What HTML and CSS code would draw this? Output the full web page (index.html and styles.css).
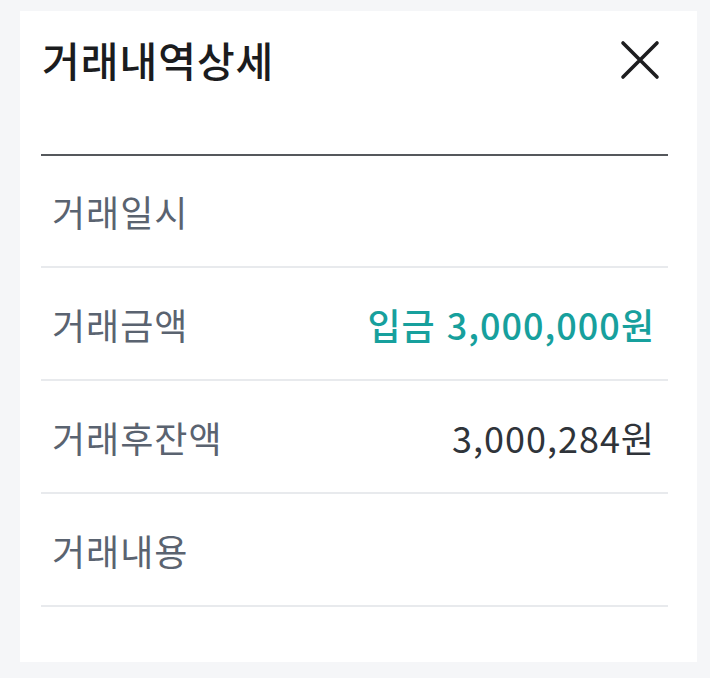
FILE: index.html
```html
<!DOCTYPE html>
<html lang="ko">
<head>
<meta charset="utf-8">
<link rel="stylesheet" href="styles.css">
</head>
<body>
<div class="card">
  <div class="header">
    <h1 class="title">거래내역상세</h1>
    <button class="close" aria-label="닫기">
      <svg width="40" height="40" viewBox="0 0 40 40"><path d="M3 3 L37 37 M37 3 L3 37" stroke="#1d1d1f" stroke-width="3.6" stroke-linecap="round" fill="none"/></svg>
    </button>
  </div>
  <div class="list">
    <div class="row"><span class="label">거래일시</span><span class="value"></span></div>
    <div class="row"><span class="label">거래금액</span><span class="value deposit">입금 3,000,000원</span></div>
    <div class="row"><span class="label">거래후잔액</span><span class="value">3,000,284원</span></div>
    <div class="row"><span class="label">거래내용</span><span class="value"></span></div>
  </div>
</div>
</body>
</html>
```

FILE: styles.css
```css
* { box-sizing: border-box; }
html, body { margin: 0; padding: 0; }
body {
  background: #f5f6f8;
  font-family: "Noto Sans CJK KR", "Noto Sans", sans-serif;
  width: 710px;
  height: 678px;
  padding: 11px 13px 0 20px;
}
.card {
  background: #ffffff;
  height: 651px;
  padding: 0 29px 0 21px;
}
.header {
  height: 145px;
  border-bottom: 2px solid #55585c;
  display: flex;
  justify-content: space-between;
  align-items: flex-start;
  padding-top: 22px;
}
.title {
  margin: 0;
  font-size: 41px;
  font-weight: 500;
  letter-spacing: 1px;
  color: #1b1c1e;
  line-height: 52px;
  padding-left: 1px;
}
.close {
  border: 0;
  background: none;
  padding: 0;
  margin: 7px 8px 0 0;
  width: 40px;
  height: 40px;
}
.close svg { display: block; }
.row {
  height: 113px;
  border-bottom: 2px solid #e8eaed;
  display: flex;
  justify-content: space-between;
  align-items: center;
  padding: 0 14px 0 11px;
}
.row:first-child { height: 112px; }
.label {
  font-size: 36px;
  letter-spacing: 1px;
  color: #5a6370;
  font-weight: 400;
}
.value {
  font-size: 36px;
  color: #2f343a;
  letter-spacing: 1px;
  margin-right: -1px;
}
.value.deposit {
  color: #17a09d;
  font-weight: 500;
}
```
